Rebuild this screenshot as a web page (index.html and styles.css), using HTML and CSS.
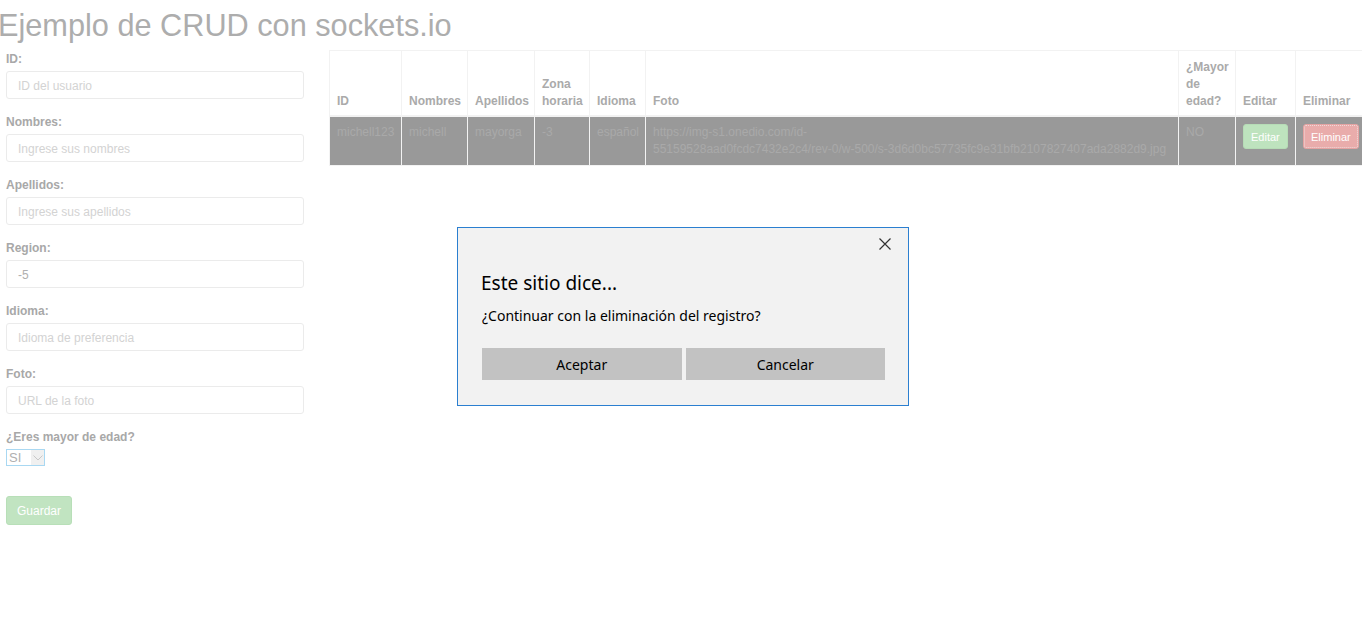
FILE: index.html
```html
<!DOCTYPE html>
<html lang="es">
<head>
<meta charset="utf-8">
<title>Ejemplo de CRUD con sockets.io</title>
<link rel="stylesheet" href="styles.css">
</head>
<body>
<div class="page">
  <h2 class="title">Ejemplo de CRUD con sockets.io</h2>
  <div class="main">
    <form class="form">
      <div class="group">
        <label class="lbl">ID:</label>
        <input class="field" type="text" placeholder="ID del usuario">
      </div>
      <div class="group">
        <label class="lbl">Nombres:</label>
        <input class="field" type="text" placeholder="Ingrese sus nombres">
      </div>
      <div class="group">
        <label class="lbl">Apellidos:</label>
        <input class="field" type="text" placeholder="Ingrese sus apellidos">
      </div>
      <div class="group">
        <label class="lbl">Region:</label>
        <input class="field" type="text" value="-5">
      </div>
      <div class="group">
        <label class="lbl">Idioma:</label>
        <input class="field" type="text" placeholder="Idioma de preferencia">
      </div>
      <div class="group">
        <label class="lbl">Foto:</label>
        <input class="field" type="text" placeholder="URL de la foto">
      </div>
      <div class="group group-last">
        <label class="lbl">¿Eres mayor de edad?</label>
        <div class="select">
          <select class="select-input"><option>SI</option><option>NO</option></select>
          <span class="select-arrow"><svg width="10" height="6" viewBox="0 0 10 6"><path d="M0.5 0.5 L5 5 L9.5 0.5" fill="none" stroke="#c8c8c8" stroke-width="1"/></svg></span>
        </div>
      </div>
      <button type="button" class="btn-save">Guardar</button>
    </form>
    <div class="table-wrap">
      <table class="grid">
        <colgroup>
          <col class="c-id"><col class="c-nom"><col class="c-ape"><col class="c-zona"><col class="c-idi"><col class="c-foto"><col class="c-may"><col class="c-edit"><col class="c-del">
        </colgroup>
        <thead>
          <tr>
            <th>ID</th><th>Nombres</th><th>Apellidos</th><th>Zona horaria</th><th>Idioma</th><th>Foto</th><th>¿Mayor de edad?</th><th>Editar</th><th>Eliminar</th>
          </tr>
        </thead>
        <tbody>
          <tr>
            <td>michell123</td><td>michell</td><td>mayorga</td><td>-3</td><td>español</td>
            <td>https://img-s1.onedio.com/id-<br>55159528aad0fcdc7432e2c4/rev-0/w-500/s-3d6d0bc57735fc9e31bfb2107827407ada2882d9.jpg</td>
            <td>NO</td>
            <td><button type="button" class="btn-sm btn-edit">Editar</button></td>
            <td><button type="button" class="btn-sm btn-del">Eliminar</button></td>
          </tr>
        </tbody>
      </table>
    </div>
  </div>
</div>
<div class="overlay">
  <div class="dialog">
    <div class="dialog-top">
      <span class="close"><svg width="12" height="12" viewBox="0 0 12 12"><path d="M0.5 0.5 L11.5 11.5 M11.5 0.5 L0.5 11.5" stroke="#333" stroke-width="1.2"/></svg></span>
    </div>
    <div class="dialog-title">Este sitio dice...</div>
    <div class="dialog-msg">¿Continuar con la eliminación del registro?</div>
    <div class="dialog-actions">
      <button type="button" class="dbtn">Aceptar</button>
      <button type="button" class="dbtn">Cancelar</button>
    </div>
  </div>
</div>
</body>
</html>
```
FILE: styles.css
```css
* { box-sizing: border-box; }
html, body { margin: 0; padding: 0; background: #fff; }
body {
  font-family: "Liberation Sans", Arial, Helvetica, sans-serif;
  font-size: 12px;
  line-height: 17px;
  color: #adadad;
  width: 1362px;
  height: 621px;
  overflow: hidden;
}
.page { padding: 0; }
.title {
  margin: 9px 0 8px -2px;
  font-size: 30.7px;
  line-height: 33px;
  font-weight: normal;
  color: #adadad;
}
.main { display: flex; align-items: flex-start; }
.form { flex: none; width: 298px; margin-left: 6px; padding-top: 1px; }
.group { margin-bottom: 15px; }
.group-last { margin-bottom: 30px; }
.lbl {
  display: block;
  font-weight: bold;
  font-size: 12px;
  line-height: 17px;
  margin-bottom: 3px;
  color: #a8a8a8;
}
.field {
  display: block;
  width: 100%;
  height: 28px;
  border: 1px solid #ebebeb;
  border-radius: 3px;
  padding: 1px 11px 0;
  font-family: inherit;
  font-size: 12px;
  color: #b0b0b0;
  background: #fff;
  outline: none;
}
.field::placeholder { color: #d3d3d3; }
.select {
  display: flex;
  width: 39px;
  height: 17px;
  border: 1px solid #a9d8f2;
  background: #fff;
}
.select-input {
  appearance: none;
  -webkit-appearance: none;
  border: 0;
  background: transparent;
  width: 24px;
  padding: 0 0 0 2px;
  margin: 0;
  font-family: inherit;
  font-size: 13px;
  line-height: 15px;
  height: 15px;
  color: #b0b0b0;
  outline: none;
}
.select-arrow {
  flex: 1;
  background: #f0f0f0;
  display: flex;
  align-items: center;
  justify-content: center;
}
.btn-save {
  width: 66px;
  height: 29px;
  border: 1px solid #b8dfb8;
  border-radius: 3px;
  background: #c1e4c1;
  color: #fff;
  font-family: inherit;
  font-size: 12px;
  padding: 0;
}
.table-wrap { margin-left: 25px; flex: none; }
.grid {
  border-collapse: collapse;
  table-layout: fixed;
  width: 1036px;
  border: 1px solid #f2f2f2;
}
.c-id { width: 72px; }
.c-nom { width: 66px; }
.c-ape { width: 67px; }
.c-zona { width: 55px; }
.c-idi { width: 56px; }
.c-foto { width: 533px; }
.c-may { width: 57px; }
.c-edit { width: 60px; }
.c-del { width: 70px; }
.grid th {
  text-align: left;
  vertical-align: bottom;
  padding: 8px 6px 5px 7px;
  font-weight: bold;
  color: #aaaaaa;
  border: 1px solid #f2f2f2;
  border-bottom: 2px solid #f2f2f2;
}
.grid td {
  vertical-align: top;
  padding: 7px 6px 7px 7px;
  background: #999999;
  color: #a9a9a9;
  border: 1px solid #f3f3f3;
  border-top: 0;
}
.btn-sm {
  display: block;
  height: 25px;
  padding: 0 7px;
  margin-top: 0;
  border-radius: 3px;
  font-family: inherit;
  font-size: 11px;
  color: #fff;
}
.btn-edit { background: #bee3be; border: 1px solid #b6dcb6; }
.btn-del {
  background: #e9acab;
  border: 1px solid #e4a3a2;
  outline: 1px dotted #f0dada;
  outline-offset: -2px;
}
.overlay {
  position: fixed;
  inset: 0;
  display: flex;
  justify-content: flex-start;
  align-items: flex-start;
  padding-top: 227px;
  padding-left: 457px;
}
.dialog {
  width: 452px;
  height: 179px;
  background: #f2f2f2;
  border: 1px solid #2b7fd0;
  padding: 0 23px 0 24px;
  font-family: "Noto Sans", "Open Sans", sans-serif;
  color: #000;
}
.dialog-top {
  display: flex;
  justify-content: flex-end;
  height: 38px;
  padding-top: 10px;
  margin-right: -6px;
}
.close { width: 12px; height: 12px; display: block; }
.close svg { display: block; }
.dialog-title {
  font-size: 19px;
  line-height: 26px;
  margin-top: 4px;
  margin-left: -1px;
}
.dialog-msg {
  font-size: 14px;
  line-height: 20px;
  margin-top: 10px;
}
.dialog-actions {
  display: flex;
  gap: 4px;
  margin-top: 22px;
}
.dbtn {
  flex: 1;
  height: 32px;
  background: #c2c2c2;
  border: 0;
  font-family: "Noto Sans", "Open Sans", sans-serif;
  font-size: 14px;
  color: #000;
  padding: 0;
}
```
